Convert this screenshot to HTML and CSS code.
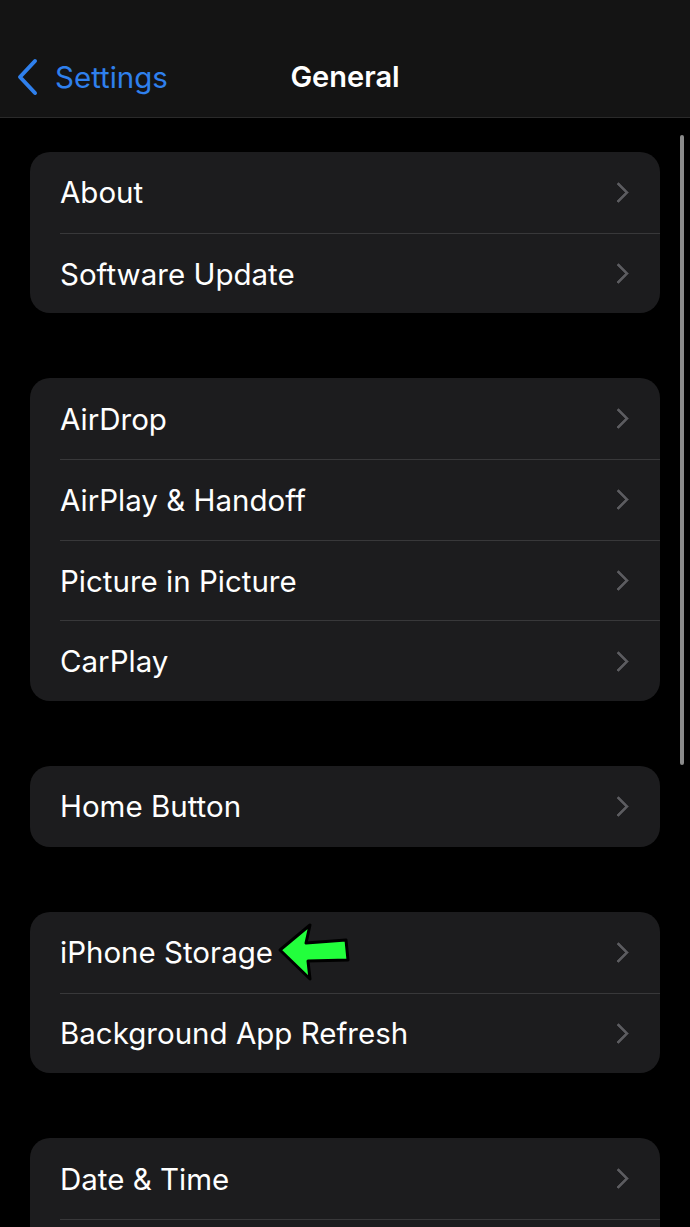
FILE: index.html
```html
<!DOCTYPE html>
<html>
<head lang="en">
    <meta charset="UTF-8">
    <title>General</title>
    <link rel="stylesheet" href="styles.css">
</head>
<body>
<div class="phone">
    <div class="navbar">
        <a class="back" href="#">
            <svg class="back-icon" width="24" height="38" viewBox="0 0 24 38">
                <path d="M20 3 L5 19 L20 35" fill="none" stroke="#2f80ed" stroke-width="4" stroke-linecap="round" stroke-linejoin="round"/>
            </svg>
            <span>Settings</span>
        </a>
        <h1 class="title">General</h1>
    </div>
    <div class="content">
        <ul class="group">
            <li><span>About</span><i class="chev"></i></li>
            <li><span>Software Update</span><i class="chev"></i></li>
        </ul>
        <ul class="group">
            <li><span>AirDrop</span><i class="chev"></i></li>
            <li><span>AirPlay &amp; Handoff</span><i class="chev"></i></li>
            <li><span>Picture in Picture</span><i class="chev"></i></li>
            <li><span>CarPlay</span><i class="chev"></i></li>
        </ul>
        <ul class="group">
            <li><span>Home Button</span><i class="chev"></i></li>
        </ul>
        <ul class="group">
            <li class="marked"><span>iPhone Storage</span>
                <svg class="arrow" width="74" height="60" viewBox="0 0 74 60">
                    <path d="M3 28 L33 3 L29 21 L69 18 L71 38 L31 39 L33 57 Z" fill="#22ff3c" stroke="#000" stroke-width="3" stroke-linejoin="round"/>
                </svg>
                <i class="chev"></i></li>
            <li><span>Background App Refresh</span><i class="chev"></i></li>
        </ul>
        <ul class="group">
            <li><span>Date &amp; Time</span><i class="chev"></i></li>
            <li class="hidden-row"></li>
        </ul>
    </div>
    <div class="scrollbar"></div>
</div>
</body>
</html>
```

FILE: styles.css
```css
*{margin: 0; padding: 0;}
ul{list-style:none;}
html, body {
    background: #000;
}
body {
    font-family: Inter, "Noto Sans", sans-serif;
    color: #fff;
}
.phone {
    width: 690px;
    height: 1227px;
    overflow: hidden;
    position: relative;
}
.navbar {
    height: 118px;
    background: #141414;
    border-bottom: 1px solid #2a2a2a;
    display: flex;
    align-items: flex-end;
    justify-content: center;
    padding-bottom: 21px;
    box-sizing: border-box;
    position: relative;
}
.back {
    position: absolute;
    left: 15px;
    bottom: 21px;
    display: flex;
    align-items: center;
    gap: 16px;
    color: #2f80ed;
    text-decoration: none;
    font-size: 29.5px;
    height: 38px;
}
.title {
    font-size: 29px;
    font-weight: 600;
    line-height: 38px;
}
.content {
    padding: 34px 30px 0;
}
.group {
    background: #1c1c1e;
    border-radius: 20px;
    margin-bottom: 65px;
    overflow: hidden;
}
.group li {
    height: 80.7px;
    box-sizing: border-box;
    margin-left: 30px;
    padding-right: 28px;
    display: flex;
    align-items: center;
    font-size: 29.5px;
    border-top: 1px solid #38383a;
    position: relative;
}
.group li:first-child {
    border-top: none;
}
.group li span {
    flex: 1;
}
.group li.marked span {
    flex: none;
}
.arrow {
    margin-left: 4px;
    margin-right: auto;
}
.chev {
    width: 12px;
    height: 12px;
    border-right: 3px solid #5c5c60;
    border-top: 3px solid #5c5c60;
    transform: rotate(45deg);
    margin-right: 6px;
    border-radius: 1px;
}
.scrollbar {
    position: absolute;
    right: 6px;
    top: 135px;
    width: 4px;
    height: 630px;
    background: #8a8a8a;
    border-radius: 2px;
}
```
